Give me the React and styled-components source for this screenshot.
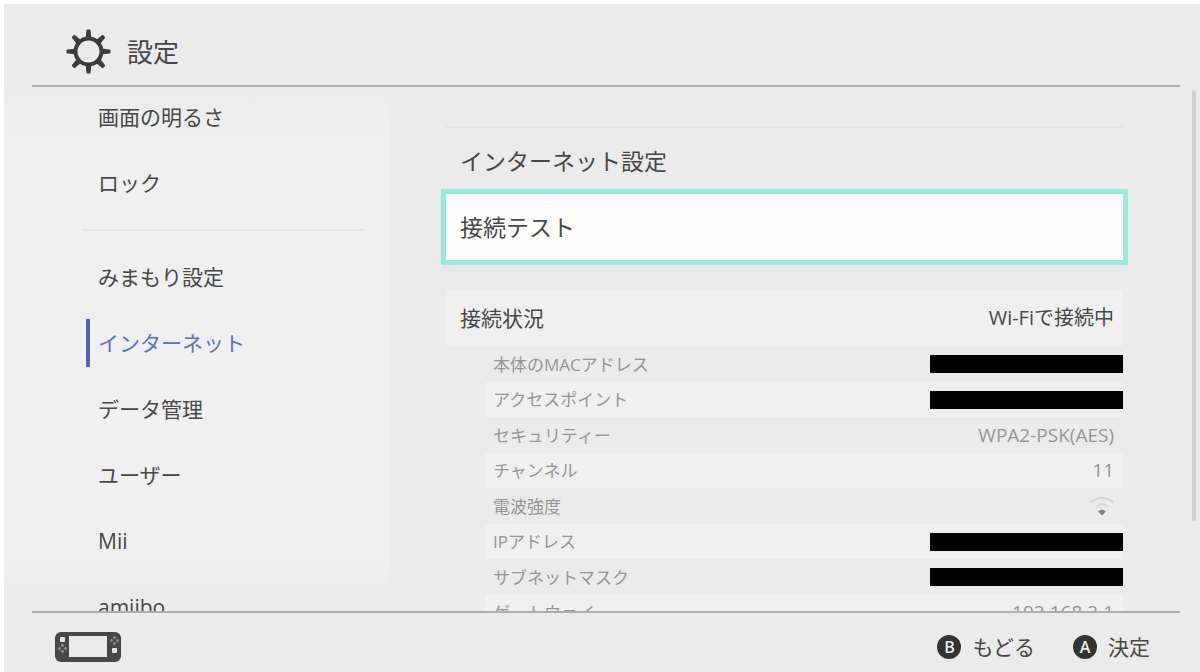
import React from "react";
import styled, { createGlobalStyle } from "styled-components";

const GlobalStyle = createGlobalStyle`
  *, *::before, *::after { box-sizing: border-box; }
  body {
    margin: 0;
    background: #ebebeb;
    color: #484848;
    font-family: "Open Sans", "Noto Sans CJK JP", sans-serif;
    font-size: 21px;
    line-height: 1;
  }
  button { font: inherit; color: inherit; border: 0; background: none; padding: 0; cursor: pointer; }
  a { color: inherit; text-decoration: none; }
`;

const Screen = styled.div`
  display: flex;
  flex-direction: column;
  height: 100vh;
  border-top: 4px solid #fff;
  border-left: 4px solid #fff;
`;

const Header = styled.header`
  flex: none;
  display: flex;
  align-items: center;
  gap: 16px;
  height: 83px;
  margin: 0 20px 0 28px;
  padding: 14px 34px 0;
  border-bottom: 2px solid #aeaeae;
`;

const Title = styled.h1`
  margin: 0;
  font-size: 26px;
  font-weight: 400;
`;

const Main = styled.main`
  flex: 1;
  min-height: 0;
  display: grid;
  grid-template-columns: 385px minmax(0, 1fr) 8px;
  overflow: hidden;
`;

const Sidebar = styled.nav`
  min-height: 0;
  overflow: hidden;
  padding: 6px 24px 0 78px;
  background: linear-gradient(#ebebeb 0, #f0f0f0 60px, #f0f0f0 calc(100% - 60px), #ebebeb calc(100% - 20px));
`;

const Menu = styled.ul`
  display: flex;
  flex-direction: column;
  gap: 18px;
  margin: 0;
  padding: 0;
  list-style: none;
`;

const MenuLink = styled.a`
  display: flex;
  align-items: center;
  height: 48px;
  margin-left: 4px;
  padding-left: 8px;
  border-left: 4px solid ${(p) => (p.$active ? "#4d62bd" : "transparent")};
  color: ${(p) => (p.$active ? "#5f6cd0" : "inherit")};
`;

const MenuDivider = styled.li`
  height: 2px;
  margin: 4px 0;
  background: #e6e6e6;
`;

const Content = styled.section`
  min-height: 0;
  overflow: hidden;
  padding: 39px 69px 0 57px;
`;

const Options = styled.div`
  display: flex;
  flex-direction: column;
  border-top: 2px solid #e4e4e4;
`;

const Option = styled.button`
  height: 66px;
  padding: 0 14px;
  text-align: left;
  font-size: 23px;
  ${(p) =>
    p.$selected &&
    `
    background: #fdfdfd;
    box-shadow: 0 0 0 5px #98ebd8, 0 8px 16px 6px rgba(90, 90, 120, 0.03);
  `}
`;

const Status = styled.div`
  display: flex;
  align-items: center;
  justify-content: space-between;
  height: 56px;
  margin-top: 30px;
  padding: 0 9px 0 14px;
  background: #f0f0f0;
`;

const StatusTitle = styled.h2`
  margin: 0;
  font-size: 21px;
  font-weight: 400;
`;

const StatusValue = styled.span`
  font-size: 20px;
`;

const Details = styled.table`
  width: calc(100% - 39px);
  margin-left: 39px;
  border-collapse: collapse;
  color: #969696;
  font-size: 17px;
`;

const DetailRow = styled.tr`
  height: 36px;
  &:nth-child(even) {
    height: 35px;
    background: #f0f0f0;
  }
`;

const DetailName = styled.th`
  padding: 0 0 0 8px;
  font-weight: 400;
  text-align: left;
`;

const DetailValue = styled.td`
  padding: 0 ${(p) => (p.$flush ? "0" : "9px")} 0 0;
  text-align: right;
  font-size: 19px;
`;

const Redacted = styled.span`
  display: block;
  width: 193px;
  height: 18px;
  margin-left: auto;
  background: #000;
`;

const ScrollBar = styled.div`
  width: 4px;
  height: 431px;
  margin-top: 3px;
  border-radius: 2px;
  background: #cfcfcf;
`;

const Footer = styled.footer`
  flex: none;
  display: flex;
  align-items: center;
  justify-content: space-between;
  height: 61px;
  margin: 0 20px 0 28px;
  padding: 9px 30px 0 23px;
  border-top: 2px solid #aeaeae;
`;

const Actions = styled.div`
  display: flex;
  gap: 38px;
`;

const Action = styled.button`
  display: flex;
  align-items: center;
  gap: 11px;
`;

const KeyCap = styled.span`
  display: grid;
  place-items: center;
  width: 24px;
  height: 24px;
  border-radius: 50%;
  background: #333;
  color: #ebebeb;
  font-size: 16px;
  font-weight: 600;
`;

const Icon = styled.svg`
  display: block;
  flex: none;
`;

const SignalIcon = styled(Icon)`
  margin-left: auto;
`;

function Gear() {
  return (
    <Icon width="45" height="45" viewBox="0 0 45 45" fill="none" stroke="#3c3c3c" aria-hidden="true">
      <circle cx="22.5" cy="22.5" r="13" strokeWidth="4" />
      {[0, 45, 90, 135, 180, 225, 270, 315].map((angle) => (
        <path
          key={angle}
          d="M19.500 10.500L20.400 1.500a1 1 0 0 1 1-1h2.200a1 1 0 0 1 1 1L25.500 10.500z"
          fill="#3c3c3c"
          stroke="none"
          transform={`rotate(${angle} 22.5 22.5)`}
        />
      ))}
    </Icon>
  );
}

function Console() {
  return (
    <Icon width="66" height="30" viewBox="0 0 66 30" aria-hidden="true">
      <rect width="66" height="30" rx="6" fill="#484848" />
      <rect x="14" y="4" width="38" height="21" fill="#ebebeb" />
      <rect x="5" y="5" width="5" height="5" rx="1" fill="#e4e4e4" />
      <rect x="57" y="16" width="5" height="5" rx="1" fill="#e4e4e4" />
      <g fill="#8c8c8c">
        <circle cx="7.5" cy="13.5" r="1.4" />
        <circle cx="7.5" cy="19.5" r="1.4" />
        <circle cx="4.5" cy="16.5" r="1.4" />
        <circle cx="10.5" cy="16.5" r="1.4" />
        <circle cx="59.5" cy="5.5" r="1.4" />
        <circle cx="59.5" cy="11.5" r="1.4" />
        <circle cx="56.5" cy="8.5" r="1.4" />
        <circle cx="62.5" cy="8.5" r="1.4" />
      </g>
    </Icon>
  );
}

function Signal() {
  return (
    <SignalIcon width="24" height="20" viewBox="0 0 24 20" fill="none" strokeWidth="2" role="img" aria-label="弱">
      <path d="M1 6.5C7 .5 17 .5 23 6.5" stroke="#d2d2d2" />
      <path d="M5.500 11c4-4 9-4 13 0" stroke="#dadada" />
      <path d="M8 15.500c2.300-2.300 5.700-2.300 8 0L12 19.500z" fill="#858585" />
    </SignalIcon>
  );
}

const upperMenu = ["画面の明るさ", "ロック"];
const lowerMenu = ["みまもり設定", "インターネット", "データ管理", "ユーザー", "Mii", "amiibo"];

const hidden = <Redacted role="img" aria-label="非表示" />;
const details = [
  { name: "本体のMACアドレス", value: hidden, flush: true },
  { name: "アクセスポイント", value: hidden, flush: true },
  { name: "セキュリティー", value: "WPA2-PSK(AES)" },
  { name: "チャンネル", value: "11" },
  { name: "電波強度", value: <Signal /> },
  { name: "IPアドレス", value: hidden, flush: true },
  { name: "サブネットマスク", value: hidden, flush: true },
  { name: "ゲートウェイ", value: "192.168.2.1" },
];

function MenuItem({ label, active }) {
  return (
    <li>
      <MenuLink href="#" $active={active} aria-current={active ? "page" : undefined}>
        {label}
      </MenuLink>
    </li>
  );
}

export default function App() {
  return (
    <>
      <GlobalStyle />
      <Screen>
        <Header>
          <Gear />
          <Title>設定</Title>
        </Header>
        <Main>
          <Sidebar>
            <Menu>
              {upperMenu.map((label) => (
                <MenuItem key={label} label={label} />
              ))}
              <MenuDivider role="separator" />
              {lowerMenu.map((label) => (
                <MenuItem key={label} label={label} active={label === "インターネット"} />
              ))}
            </Menu>
          </Sidebar>
          <Content>
            <Options>
              <Option>インターネット設定</Option>
              <Option $selected>接続テスト</Option>
            </Options>
            <Status>
              <StatusTitle>接続状況</StatusTitle>
              <StatusValue>Wi-Fiで接続中</StatusValue>
            </Status>
            <Details>
              <tbody>
                {details.map((row) => (
                  <DetailRow key={row.name}>
                    <DetailName scope="row">{row.name}</DetailName>
                    <DetailValue $flush={row.flush}>{row.value}</DetailValue>
                  </DetailRow>
                ))}
              </tbody>
            </Details>
          </Content>
          <ScrollBar />
        </Main>
        <Footer>
          <Console />
          <Actions>
            <Action>
              <KeyCap>B</KeyCap>もどる
            </Action>
            <Action>
              <KeyCap>A</KeyCap>決定
            </Action>
          </Actions>
        </Footer>
      </Screen>
    </>
  );
}
